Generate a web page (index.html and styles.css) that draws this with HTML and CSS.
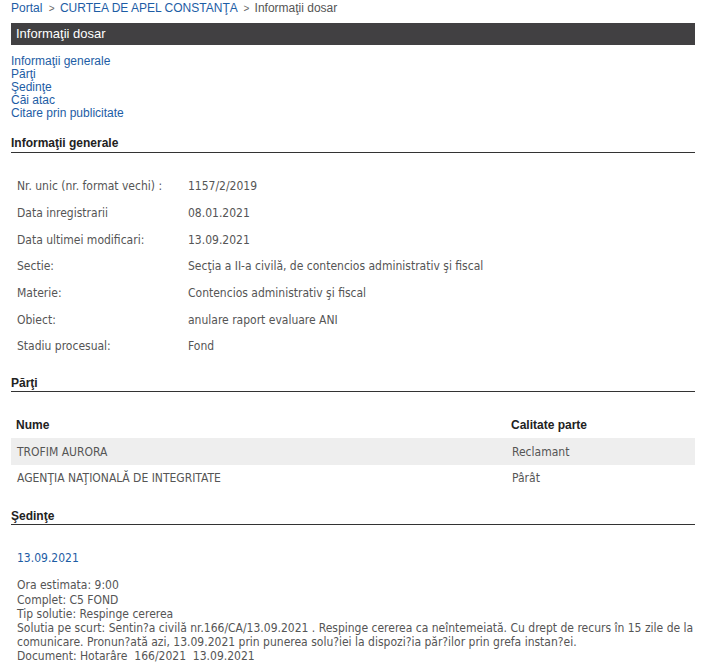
FILE: index.html
```html
<!DOCTYPE html>
<html lang="ro">
<head>
<meta charset="utf-8">
<title>Informaţii dosar</title>
<link rel="stylesheet" href="styles.css">
</head>
<body>
<div class="page">
  <div class="crumbs">
    <a href="#" class="link">Portal</a>
    <span class="sep">&gt;</span>
    <a href="#" class="link">CURTEA DE APEL CONSTANŢA</a>
    <span class="sep">&gt;</span>
    <span class="cur">Informaţii dosar</span>
  </div>
  <div class="bar">Informaţii dosar</div>
  <ul class="toc">
    <li><a href="#" class="link">Informaţii generale</a></li>
    <li><a href="#" class="link">Părţi</a></li>
    <li><a href="#" class="link">Şedinţe</a></li>
    <li><a href="#" class="link">Căi atac</a></li>
    <li><a href="#" class="link">Citare prin publicitate</a></li>
  </ul>

  <h2 class="sec sec-first">Informaţii generale</h2>
  <div class="info">
    <div class="row"><span class="lbl">Nr. unic (nr. format vechi) :</span><span class="val">1157/2/2019</span></div>
    <div class="row"><span class="lbl">Data inregistrarii</span><span class="val">08.01.2021</span></div>
    <div class="row"><span class="lbl">Data ultimei modificari:</span><span class="val">13.09.2021</span></div>
    <div class="row"><span class="lbl">Sectie:</span><span class="val">Secţia a II-a civilă, de contencios administrativ şi fiscal</span></div>
    <div class="row"><span class="lbl">Materie:</span><span class="val">Contencios administrativ şi fiscal</span></div>
    <div class="row"><span class="lbl">Obiect:</span><span class="val">anulare raport evaluare ANI</span></div>
    <div class="row"><span class="lbl">Stadiu procesual:</span><span class="val">Fond</span></div>
  </div>

  <h2 class="sec sec-parti">Părţi</h2>
  <div class="parties">
    <div class="prow phead"><span class="pname">Nume</span><span class="pcal">Calitate parte</span></div>
    <div class="prow alt"><span class="pname">TROFIM AURORA</span><span class="pcal">Reclamant</span></div>
    <div class="prow"><span class="pname">AGENŢIA NAŢIONALĂ DE INTEGRITATE</span><span class="pcal">Pârât</span></div>
  </div>

  <h2 class="sec sec-sed">Şedinţe</h2>
  <div class="hearing">
    <a href="#" class="date">13.09.2021</a>
    <div class="details">
      Ora estimata: 9:00<br>
      Complet: C5 FOND<br>
      Tip solutie: Respinge cererea<br>
      Solutia pe scurt: Sentin?a civilă nr.166/CA/13.09.2021 . Respinge cererea ca neîntemeiată. Cu drept de recurs în 15 zile de la comunicare. Pronun?ată azi, 13.09.2021 prin punerea solu?iei la dispozi?ia păr?ilor prin grefa instan?ei.<br>
      Document: Hotarâre&nbsp; 166/2021&nbsp; 13.09.2021
    </div>
  </div>
</div>
</body>
</html>
```

FILE: styles.css
```css
html, body {
  margin: 0;
  padding: 0;
  background: #fff;
}
.page {
  width: 684px;
  margin-left: 11px;
  font-family: "Liberation Sans", Arial, sans-serif;
}
.link {
  color: #1d5da5;
  text-decoration: none;
}
.crumbs {
  font-size: 12px;
  line-height: 16px;
  height: 16px;
  margin-bottom: 7px;
  white-space: nowrap;
}
.crumbs .sep {
  color: #666;
  font-size: 10px;
  margin: 0 2px 0 3px;
}
.crumbs .cur {
  color: #555;
}
.bar {
  background: #414042;
  color: #fff;
  font-size: 13px;
  height: 22px;
  line-height: 22px;
  padding-left: 5px;
}
.toc {
  list-style: none;
  margin: 10px 0 0 0;
  padding: 0;
  font-size: 12px;
  line-height: 13px;
}
.sec {
  margin: 0;
  font-size: 12px;
  font-weight: bold;
  color: #222;
  line-height: 16px;
  padding-bottom: 1px;
  border-bottom: 1px solid #333;
}
.sec-first {
  margin-top: 15px;
}
.info {
  padding-top: 20px;
  font-family: "DejaVu Sans Condensed", "DejaVu Sans", Tahoma, sans-serif;
  font-size: 12px;
  color: #555;
}
.row {
  display: flex;
  height: 26.7px;
  align-items: center;
}
.lbl {
  width: 171px;
  padding-left: 6px;
  flex: none;
}
.sec-parti {
  margin-top: 15px;
  padding-bottom: 0;
}
.parties {
  padding-top: 20px;
  font-size: 12px;
}
.prow {
  display: flex;
  align-items: center;
  height: 26.5px;
  font-family: "DejaVu Sans Condensed", "DejaVu Sans", Tahoma, sans-serif;
  color: #555;
}
.prow.alt {
  background: #eeeeee;
}
.prow.phead {
  font-family: "Liberation Sans", Arial, sans-serif;
  font-weight: bold;
  color: #222;
}
.pname {
  width: 495px;
  padding-left: 6px;
  flex: none;
}
.phead .pname {
  padding-left: 5px;
}
.sec-sed {
  margin-top: 17px;
  padding-bottom: 0;
}
.hearing {
  padding: 25px 0 0 6px;
  font-family: "DejaVu Sans Condensed", "DejaVu Sans", Tahoma, sans-serif;
  font-size: 12px;
  color: #555;
}
.date {
  display: block;
  color: #1d5da5;
  text-decoration: none;
  line-height: 16px;
  margin-bottom: 12px;
}
.details {
  line-height: 14.2px;
}
```
